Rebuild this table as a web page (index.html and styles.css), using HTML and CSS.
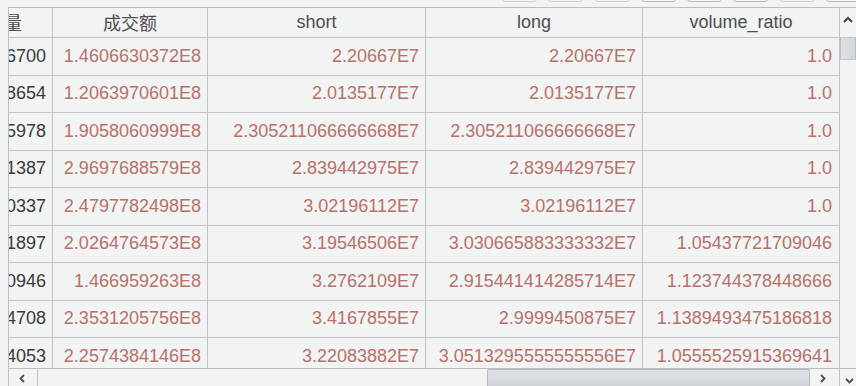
FILE: index.html
```html
<!DOCTYPE html>
<html lang="zh">
<head>
<meta charset="utf-8">
<link rel="stylesheet" href="styles.css">
</head>
<body>
<div class="app">
  <div class="toolbar">
    <span class="tb light"></span><span class="tb light"></span><span class="tb light"></span><span class="tb"></span><span class="tb"></span><span class="tb"></span><span class="tb light"></span><span class="tb"></span>
  </div>
  <div class="pane">
    <div class="main">
      <div class="viewport">
        <div class="grid">
          <div class="hd">成交量</div><div class="hd">成交额</div><div class="hd">short</div><div class="hd">long</div><div class="hd">volume_ratio</div>

          <div class="c k">2146700</div><div class="c">1.4606630372E8</div><div class="c">2.20667E7</div><div class="c">2.20667E7</div><div class="c last">1.0</div>
          <div class="c k">1838654</div><div class="c">1.2063970601E8</div><div class="c">2.0135177E7</div><div class="c">2.0135177E7</div><div class="c last">1.0</div>
          <div class="c k">2965978</div><div class="c">1.9058060999E8</div><div class="c">2.305211066666668E7</div><div class="c">2.305211066666668E7</div><div class="c last">1.0</div>
          <div class="c k">4491387</div><div class="c">2.9697688579E8</div><div class="c">2.839442975E7</div><div class="c">2.839442975E7</div><div class="c last">1.0</div>
          <div class="c k">3700337</div><div class="c">2.4797782498E8</div><div class="c">3.02196112E7</div><div class="c">3.02196112E7</div><div class="c last">1.0</div>
          <div class="c k">3011897</div><div class="c">2.0264764573E8</div><div class="c">3.19546506E7</div><div class="c">3.030665883333332E7</div><div class="c last">1.05437721709046</div>
          <div class="c k">2140946</div><div class="c">1.466959263E8</div><div class="c">3.2762109E7</div><div class="c">2.915441414285714E7</div><div class="c last">1.123744378448666</div>
          <div class="c k">3414708</div><div class="c">2.3531205756E8</div><div class="c">3.4167855E7</div><div class="c">2.9999450875E7</div><div class="c last">1.1389493475186818</div>
          <div class="c k">3244053</div><div class="c">2.2574384146E8</div><div class="c">3.22083882E7</div><div class="c">3.0513295555555556E7</div><div class="c last">1.0555525915369641</div>
        </div>
      </div>
      <div class="vscroll">
        <div class="vbtn">
          <svg class="ico" width="10" height="7" viewBox="0 0 10 7"><polyline points="1,6 5,2 9,6" fill="none" stroke="#404040" stroke-width="2"/></svg>
        </div>
        <div class="vthumb"></div>
      </div>
    </div>
    <div class="hbar">
      <div class="hbtn left">
        <svg class="ico" width="28" height="17" viewBox="0 0 28 17"><polyline points="15,6 11.5,9.5 15,13" fill="none" stroke="#505050" stroke-width="1.9"/></svg>
      </div>
      <div class="htrack"><div class="hthumb"></div></div>
      <div class="hbtn right">
        <svg class="ico" width="29" height="17" viewBox="0 0 29 17"><polyline points="11,6 14.5,9.5 11,13" fill="none" stroke="#505050" stroke-width="1.9"/></svg>
      </div>
      <div class="corner">
        <svg class="ico" width="16" height="17" viewBox="0 0 16 17"><polyline points="6,10 9.5,13.5 13,10" fill="none" stroke="#505050" stroke-width="1.9"/></svg>
      </div>
    </div>
  </div>
</div>
</body>
</html>
```

FILE: styles.css
```css
html, body {
  margin: 0;
  padding: 0;
  background: #f2f3f3;
  overflow: hidden;
}

.app {
  width: 856px;
  height: 386px;
  overflow: hidden;
  font-family: "Liberation Sans", "Noto Sans CJK SC", sans-serif;
}

.toolbar {
  height: 7px;
  display: flex;
  gap: 11.3px;
  padding-left: 502px;
  overflow: hidden;
}

.tb {
  flex: 0 0 35px;
  height: 22px;
  margin-top: -20px;
  border: 1px solid #b4bac0;
  border-radius: 3px;
  background: #f4f5f5;
  box-sizing: border-box;
}

.tb.light {
  border-color: #cdd1d5;
}

.pane {
  margin-left: 8px;
  border-left: 1px solid #b9bec3;
  border-top: 1px solid #b9bec3;
  width: 848px;
  box-sizing: border-box;
}

.main {
  display: flex;
  height: 360px;
}

.viewport {
  width: 831px;
  flex: 0 0 831px;
  overflow: hidden;
}

.grid {
  margin-left: -71px;
  display: grid;
  grid-template-columns: 115px 155px 218px 217px 197px;
  grid-template-rows: 30px;
  grid-auto-rows: 37.5px;
}

.hd, .c {
  box-sizing: border-box;
  border-right: 1px solid #c0c5ca;
  border-bottom: 1px solid #c0c5ca;
  display: flex;
  align-items: center;
  overflow: hidden;
  white-space: nowrap;
  font-size: 18px;
}

.hd {
  justify-content: center;
  color: #4d4d4d;
  padding-bottom: 1px;
}

.c {
  justify-content: flex-end;
  padding-right: 6px;
  color: #b7716a;
}

.c.last {
  padding-right: 7px;
}

.c.k {
  color: #3a3a3a;
}

.vscroll {
  width: 16px;
  flex: 0 0 16px;
  display: flex;
  flex-direction: column;
  background: #f2f3f3;
}

.vbtn {
  height: 30px;
  flex: 0 0 30px;
  box-sizing: border-box;
  border-bottom: 1px solid #c0c5ca;
  display: flex;
  align-items: flex-start;
  justify-content: center;
  padding-top: 8px;
}

.ico {
  display: block;
  flex: none;
}

.vthumb {
  height: 22px;
  flex: 0 0 22px;
  box-sizing: border-box;
  border: 1px solid #bcc1c6;
  border-top: none;
  background: linear-gradient(to right, #dfe2e5, #d2d6da);
}

.hbar {
  display: flex;
  height: 18px;
  box-sizing: border-box;
  border-top: 1px solid #b9bec3;
}

.hbtn {
  display: flex;
  box-sizing: border-box;
}

.hbtn.left {
  width: 29px;
  border-right: 1px solid #c0c5ca;
}

.hbtn.right {
  width: 29px;
}

.htrack {
  width: 772px;
  display: flex;
  padding-left: 449px;
  box-sizing: border-box;
}

.hthumb {
  width: 323px;
  box-sizing: border-box;
  border: 1px solid #b4bac0;
  border-bottom: none;
  border-radius: 2px 2px 0 0;
  background: linear-gradient(to bottom, #e0e3e6, #d0d4d8);
}

.corner {
  width: 17px;
  box-sizing: border-box;
  border-left: 1px solid #c0c5ca;
  display: flex;
}
```
